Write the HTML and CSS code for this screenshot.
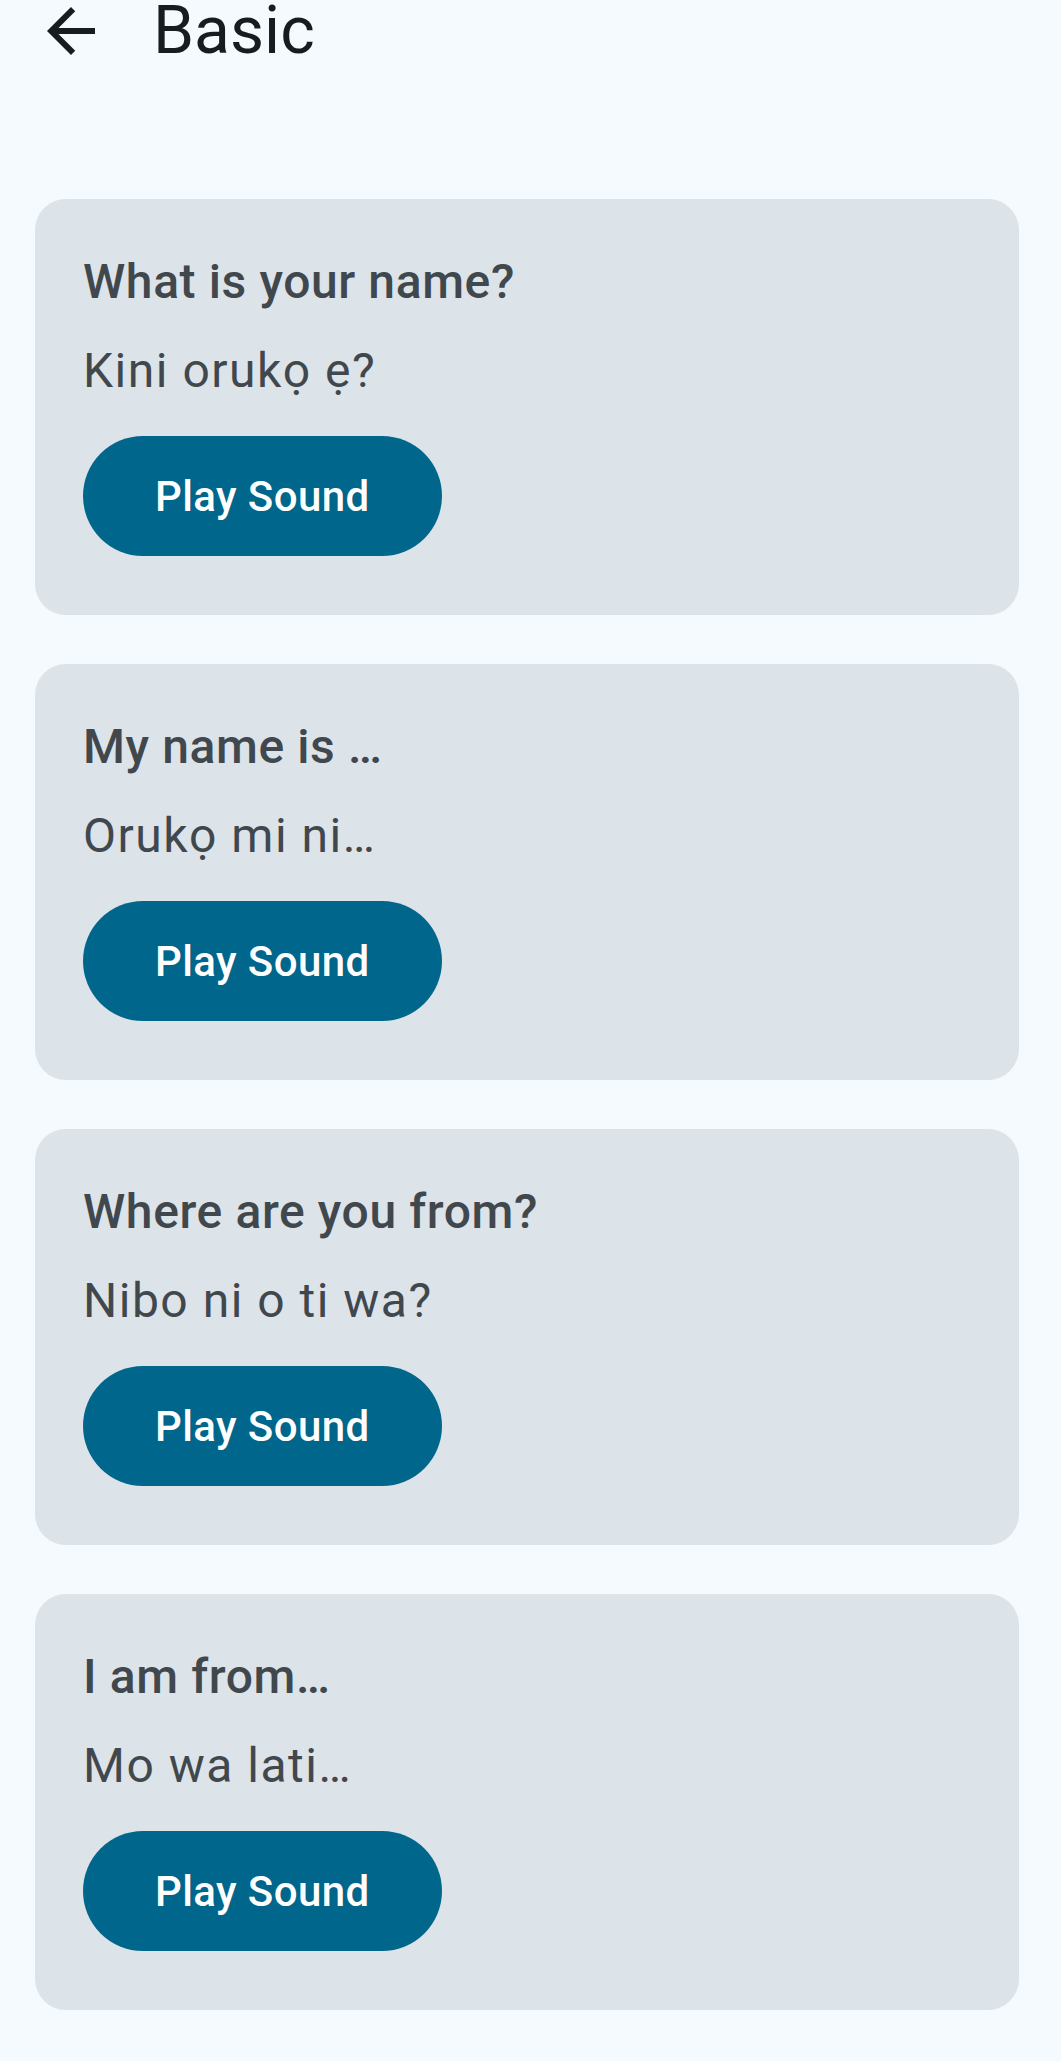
FILE: index.html
```html
<!DOCTYPE html>
<html lang="en">
<head>
    <meta charset="UTF-8">
    <meta name="viewport" content="width=device-width, initial-scale=1.0">
    <title>Basic</title>
    <link rel="stylesheet" href="styles.css">
</head>
<body>
    <header class="topbar">
        <svg class="back-icon" viewBox="0 0 24 24" width="72" height="72" aria-hidden="true">
            <path d="M20 11H7.83l5.59-5.59L12 4l-8 8 8 8 1.41-1.41L7.83 13H20v-2z" fill="#171c1f"/>
        </svg>
        <h1 class="title">Basic</h1>
    </header>

    <main class="phrases">
        <div class="card">
            <h2 class="phrase">What is your name?</h2>
            <p class="translation">Kini orukọ ẹ?</p>
            <button class="play">Play Sound</button>
        </div>

        <div class="card">
            <h2 class="phrase">My name is …</h2>
            <p class="translation">Orukọ mi ni…</p>
            <button class="play">Play Sound</button>
        </div>

        <div class="card">
            <h2 class="phrase">Where are you from?</h2>
            <p class="translation">Nibo ni o ti wa?</p>
            <button class="play">Play Sound</button>
        </div>

        <div class="card">
            <h2 class="phrase">I am from…</h2>
            <p class="translation">Mo wa lati…</p>
            <button class="play">Play Sound</button>
        </div>
    </main>
</body>
</html>
```

FILE: styles.css
```css
body {
    font-family: Roboto, "Noto Sans", sans-serif;
    background-color: #f4fafe;
    margin: 0;
    padding: 0;
}

.topbar {
    display: flex;
    align-items: center;
    height: 62px;
}

.back-icon {
    margin-left: 35px;
    flex-shrink: 0;
}

.title {
    margin: 0 0 0 46px;
    font-size: 66px;
    font-weight: 400;
    color: #171c1f;
    line-height: 62px;
}

.phrases {
    display: flex;
    flex-direction: column;
    gap: 49px;
    margin: 137px 0 0 35px;
    width: 984px;
}

.card {
    background-color: #dce3e9;
    border-radius: 31px;
    padding: 55px 48px 59px;
    display: flex;
    flex-direction: column;
    align-items: flex-start;
}

.phrase {
    margin: 0;
    font-size: 48px;
    font-weight: 500;
    line-height: 56px;
    letter-spacing: 0.6px;
    color: #41484d;
}

.translation {
    margin: 33px 0 0;
    font-size: 48px;
    font-weight: 400;
    line-height: 56px;
    color: #41484d;
    letter-spacing: 1.5px;
}

.play {
    margin-top: 37px;
    height: 120px;
    padding: 0 72px;
    border: none;
    border-radius: 60px;
    background-color: #00668b;
    color: #ffffff;
    font-family: Roboto, sans-serif;
    font-size: 42px;
    font-weight: 500;
    letter-spacing: 0.4px;
    cursor: pointer;
}
```
